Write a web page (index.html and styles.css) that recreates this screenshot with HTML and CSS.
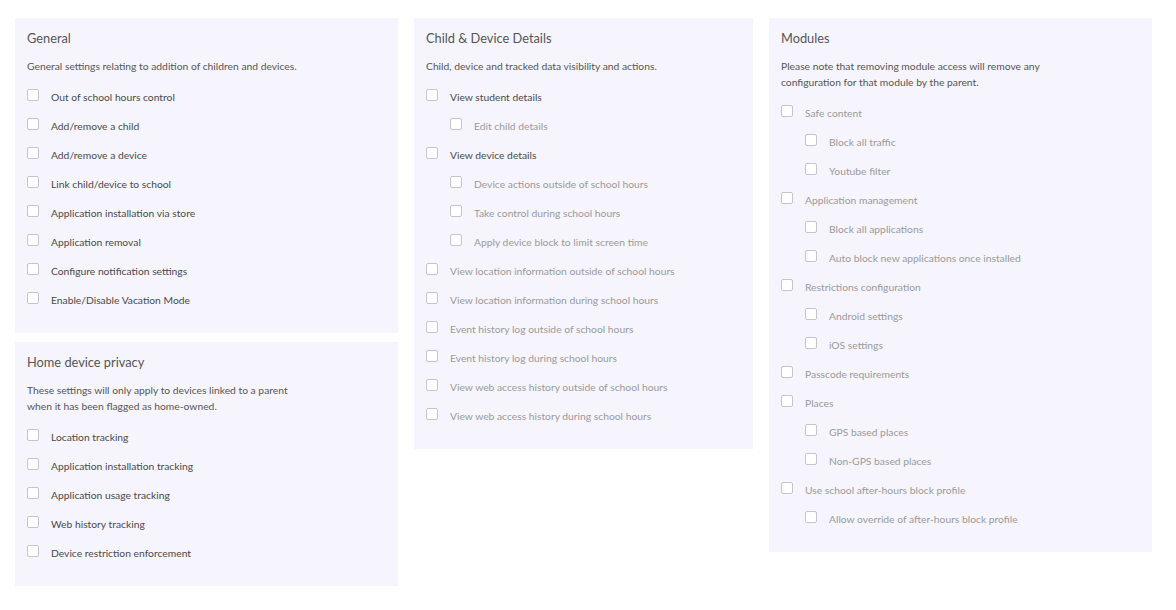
FILE: index.html
```html
<!DOCTYPE html>
<html lang="en">
<head>
    <meta charset="UTF-8">
    <meta name="viewport" content="width=device-width, initial-scale=1.0">
    <title>Permissions</title>
    <link rel="stylesheet" href="styles.css">
</head>
<body>
    <div class="settings">
        <div class="column">
            <div class="card">
                <h2>General</h2>
                <p class="desc">General settings relating to addition of children and devices.</p>
                <label class="option"><input type="checkbox"><span>Out of school hours control</span></label>
                <label class="option"><input type="checkbox"><span>Add/remove a child</span></label>
                <label class="option"><input type="checkbox"><span>Add/remove a device</span></label>
                <label class="option"><input type="checkbox"><span>Link child/device to school</span></label>
                <label class="option"><input type="checkbox"><span>Application installation via store</span></label>
                <label class="option"><input type="checkbox"><span>Application removal</span></label>
                <label class="option"><input type="checkbox"><span>Configure notification settings</span></label>
                <label class="option"><input type="checkbox"><span>Enable/Disable Vacation Mode</span></label>
            </div>

            <div class="card">
                <h2>Home device privacy</h2>
                <p class="desc">These settings will only apply to devices linked to a parent<br>when it has been flagged as home-owned.</p>
                <label class="option"><input type="checkbox"><span>Location tracking</span></label>
                <label class="option"><input type="checkbox"><span>Application installation tracking</span></label>
                <label class="option"><input type="checkbox"><span>Application usage tracking</span></label>
                <label class="option"><input type="checkbox"><span>Web history tracking</span></label>
                <label class="option"><input type="checkbox"><span>Device restriction enforcement</span></label>
            </div>
        </div>

        <div class="column">
            <div class="card">
                <h2>Child &amp; Device Details</h2>
                <p class="desc">Child, device and tracked data visibility and actions.</p>
                <label class="option"><input type="checkbox"><span>View student details</span></label>
                <label class="option sub disabled"><input type="checkbox"><span>Edit child details</span></label>
                <label class="option"><input type="checkbox"><span>View device details</span></label>
                <label class="option sub disabled"><input type="checkbox"><span>Device actions outside of school hours</span></label>
                <label class="option sub disabled"><input type="checkbox"><span>Take control during school hours</span></label>
                <label class="option sub disabled"><input type="checkbox"><span>Apply device block to limit screen time</span></label>
                <label class="option disabled"><input type="checkbox"><span>View location information outside of school hours</span></label>
                <label class="option disabled"><input type="checkbox"><span>View location information during school hours</span></label>
                <label class="option disabled"><input type="checkbox"><span>Event history log outside of school hours</span></label>
                <label class="option disabled"><input type="checkbox"><span>Event history log during school hours</span></label>
                <label class="option disabled"><input type="checkbox"><span>View web access history outside of school hours</span></label>
                <label class="option disabled"><input type="checkbox"><span>View web access history during school hours</span></label>
            </div>
        </div>

        <div class="column">
            <div class="card">
                <h2>Modules</h2>
                <p class="desc">Please note that removing module access will remove any<br>configuration for that module by the parent.</p>
                <label class="option disabled"><input type="checkbox"><span>Safe content</span></label>
                <label class="option sub disabled"><input type="checkbox"><span>Block all traffic</span></label>
                <label class="option sub disabled"><input type="checkbox"><span>Youtube filter</span></label>
                <label class="option disabled"><input type="checkbox"><span>Application management</span></label>
                <label class="option sub disabled"><input type="checkbox"><span>Block all applications</span></label>
                <label class="option sub disabled"><input type="checkbox"><span>Auto block new applications once installed</span></label>
                <label class="option disabled"><input type="checkbox"><span>Restrictions configuration</span></label>
                <label class="option sub disabled"><input type="checkbox"><span>Android settings</span></label>
                <label class="option sub disabled"><input type="checkbox"><span>iOS settings</span></label>
                <label class="option disabled"><input type="checkbox"><span>Passcode requirements</span></label>
                <label class="option disabled"><input type="checkbox"><span>Places</span></label>
                <label class="option sub disabled"><input type="checkbox"><span>GPS based places</span></label>
                <label class="option sub disabled"><input type="checkbox"><span>Non-GPS based places</span></label>
                <label class="option disabled"><input type="checkbox"><span>Use school after-hours block profile</span></label>
                <label class="option sub disabled"><input type="checkbox"><span>Allow override of after-hours block profile</span></label>
            </div>
        </div>
    </div>
</body>
</html>
```

FILE: styles.css
```css
body {
    margin: 0;
    background-color: #fff;
    font-family: Lato, 'Open Sans', sans-serif;
    color: #4f4f4f;
}

.settings {
    display: grid;
    grid-template-columns: 383px 339px 383px;
    column-gap: 16px;
    align-items: start;
    padding: 18px 0 0 15px;
}

.column {
    display: flex;
    flex-direction: column;
    gap: 9px;
}

.card {
    background-color: #f6f5fd;
    padding: 9px 12px 19px;
}

.card h2 {
    margin: 0;
    font-size: 12.8px;
    font-weight: 400;
    line-height: 22px;
    color: #555;
}

.desc {
    margin: 9px 0 8px;
    font-size: 10.3px;
    line-height: 16px;
    color: #555;
}

.option {
    display: flex;
    align-items: center;
    height: 29px;
    font-size: 10.3px;
    color: #4a4a4a;
}

.option input {
    appearance: none;
    -webkit-appearance: none;
    width: 12px;
    height: 12px;
    margin: -3px 12px 0 0;
    border: 1px solid #c4c4cc;
    border-radius: 2px;
    background-color: #fff;
    flex-shrink: 0;
}

.option.sub {
    padding-left: 24px;
}

.option.disabled {
    color: #9a9a9a;
}
```
